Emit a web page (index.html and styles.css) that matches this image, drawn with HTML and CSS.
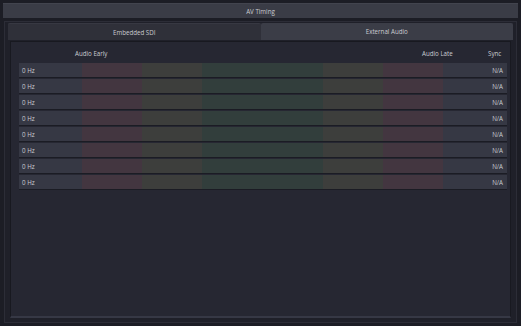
FILE: index.html
```html
<!DOCTYPE html>
<html>
<head>
<meta charset="utf-8">
<link rel="stylesheet" href="styles.css">
</head>
<body>
<div class="app">
  <div class="titlebar">AV Timing</div>
  <div class="frame">
    <div class="tabs">
      <div class="tab active">Embedded SDI</div>
      <div class="tab">External Audio</div>
    </div>
    <div class="content">
      <div class="header">
        <span class="h-early">Audio Early</span>
        <span class="h-late">Audio Late</span>
        <span class="h-sync">Sync</span>
      </div>
      <div class="rows">
        <div class="row"><span class="z grey lbl">0 Hz</span><span class="z red"></span><span class="z yellow"></span><span class="z green"></span><span class="z yellow"></span><span class="z red"></span><span class="z grey val">N/A</span></div>
        <div class="row"><span class="z grey lbl">0 Hz</span><span class="z red"></span><span class="z yellow"></span><span class="z green"></span><span class="z yellow"></span><span class="z red"></span><span class="z grey val">N/A</span></div>
        <div class="row"><span class="z grey lbl">0 Hz</span><span class="z red"></span><span class="z yellow"></span><span class="z green"></span><span class="z yellow"></span><span class="z red"></span><span class="z grey val">N/A</span></div>
        <div class="row"><span class="z grey lbl">0 Hz</span><span class="z red"></span><span class="z yellow"></span><span class="z green"></span><span class="z yellow"></span><span class="z red"></span><span class="z grey val">N/A</span></div>
        <div class="row"><span class="z grey lbl">0 Hz</span><span class="z red"></span><span class="z yellow"></span><span class="z green"></span><span class="z yellow"></span><span class="z red"></span><span class="z grey val">N/A</span></div>
        <div class="row"><span class="z grey lbl">0 Hz</span><span class="z red"></span><span class="z yellow"></span><span class="z green"></span><span class="z yellow"></span><span class="z red"></span><span class="z grey val">N/A</span></div>
        <div class="row"><span class="z grey lbl">0 Hz</span><span class="z red"></span><span class="z yellow"></span><span class="z green"></span><span class="z yellow"></span><span class="z red"></span><span class="z grey val">N/A</span></div>
        <div class="row"><span class="z grey lbl">0 Hz</span><span class="z red"></span><span class="z yellow"></span><span class="z green"></span><span class="z yellow"></span><span class="z red"></span><span class="z grey val">N/A</span></div>
      </div>
    </div>
  </div>
</div>
</body>
</html>
```
FILE: styles.css
```css
* { box-sizing: border-box; }
html, body {
  margin: 0;
  padding: 0;
  width: 521px;
  height: 326px;
  overflow: hidden;
  background: #1c1d25;
  font-family: "Open Sans", "DejaVu Sans", sans-serif;
  font-size: 6.2px;
  color: #cbccd2;
}
.app {
  width: 521px;
  height: 326px;
  padding: 3px 3px 3px 3px;
  display: flex;
  flex-direction: column;
}
.titlebar {
  height: 15px;
  background: #3a3c46;
  border-top: 1px solid #42444e;
  display: flex;
  align-items: center;
  justify-content: center;
  flex: none;
}
.frame {
  flex: 1;
  margin: 3px 1px 0 1px;
  border: 1px solid #2c2d37;
  background: #1f2029;
  padding: 1px 3px 4px 3px;
  display: flex;
  flex-direction: column;
}
.tabs {
  display: flex;
  height: 17px;
  flex: none;
  background: #25262f;
}
.tab {
  flex: 1;
  display: flex;
  align-items: center;
  justify-content: center;
  background: #3b3d47;
  border-radius: 2px 2px 0 0;
}
.tab.active {
  background: #2f3039;
  border-top: 1px solid #373842;
}
.content {
  flex: 1;
  margin: 1px 2px 0 2px;
  background: #262732;
  border: 1px solid #181920;
  border-bottom: 2px solid #363845;
  padding: 4px 5px 0 8px;
}
.header {
  position: relative;
  height: 17px;
}
.header span { position: absolute; top: 3px; }
.h-early { left: 56px; }
.h-late { left: 403px; }
.h-sync { left: 469px; }
.rows {
  display: flex;
  flex-direction: column;
  gap: 2px;
  width: 488px;
}
.row {
  display: flex;
  height: 14px;
  box-shadow: 0 1px 0 #1b1c24;
}
.z {
  flex: 1;
  display: flex;
  align-items: center;
}
.z.green { flex: 2; background: #323e3c; }
.z.red { background: #433640; }
.z.yellow { background: #3d3e3c; }
.z.grey { background: #363844; }
.lbl { padding-left: 3px; }
.val { justify-content: flex-end; padding-right: 4px; }
```
